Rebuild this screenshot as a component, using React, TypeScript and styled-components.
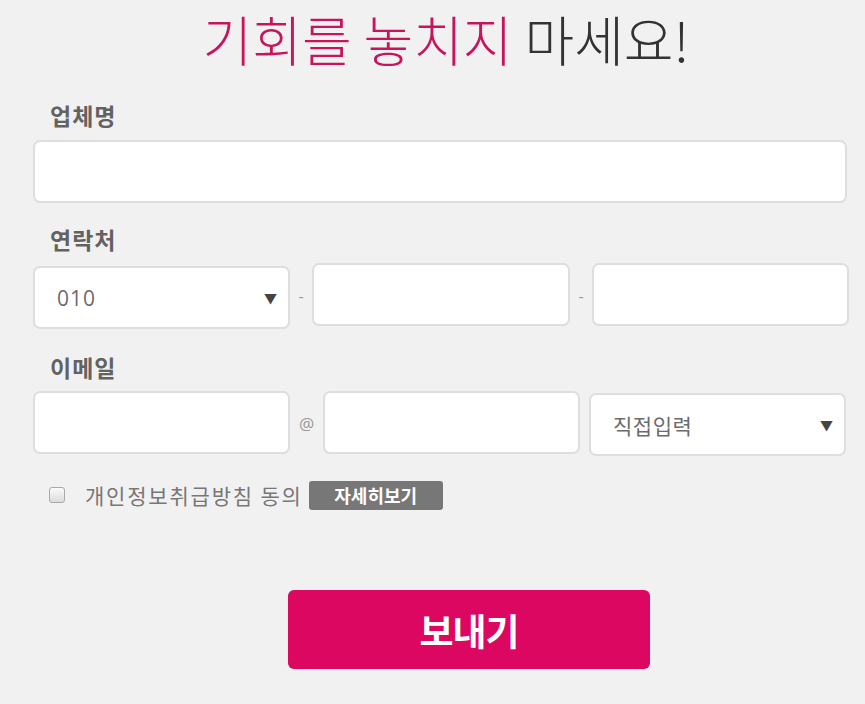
import styled, { createGlobalStyle } from "styled-components"

const GlobalStyle = createGlobalStyle`
    body {
        margin: 0;
        background: #f1f1f1;
        font-family: "Noto Sans CJK KR", "Noto Sans", sans-serif;
    }
`

const Page = styled.div`
    width: 865px;
    height: 704px;
    padding: 0 16px 0 33px;
    box-sizing: border-box;
    overflow: hidden;
`

const Title = styled.h1`
    margin: 0;
    padding-left: 10px;
    text-align: center;
    font-size: 54px;
    font-weight: 300;
    line-height: 78px;
    color: #333;
`

const Accent = styled.span`
    color: #c8145c;
`

const Label = styled.div<{ $top: number }>`
    margin-top: ${(p) => p.$top}px;
    padding-left: 17px;
    font-size: 23px;
    font-weight: 700;
    line-height: 32px;
    letter-spacing: 1px;
    color: #626262;
    height: 32px;
`

const TextBox = styled.input`
    display: block;
    box-sizing: border-box;
    width: 100%;
    height: 63px;
    background: #fff;
    border: 2px solid #dedede;
    border-radius: 7px;
    outline: none;
    margin: 0;
`

const WideBox = styled(TextBox)`
    width: 814px;
    margin-top: 9px;
`

const PhoneRow = styled.div`
    display: grid;
    grid-template-columns: 257px 22px 258px 22px 257px;
    align-items: start;
    margin-top: 8px;
`

const EmailRow = styled.div`
    display: grid;
    grid-template-columns: 257px 33px 257px 9px 257px;
    align-items: start;
    margin-top: 8px;
`

const Sep = styled.span<{ $size: number }>`
    align-self: center;
    text-align: center;
    font-family: "Open Sans", sans-serif;
    font-size: ${(p) => p.$size}px;
    color: #999;
`

const SelectBox = styled.div<{ $offset: number }>`
    box-sizing: border-box;
    height: 63px;
    margin-top: ${(p) => p.$offset}px;
    background: #fff;
    border: 2px solid #dedede;
    border-radius: 7px;
    display: flex;
    align-items: center;
    justify-content: space-between;
    padding: 0 11px 0 22px;
`

const SelectText = styled.span<{ $latin?: boolean }>`
    font-family: ${(p) => (p.$latin ? '"Open Sans", sans-serif' : '"Noto Sans CJK KR", sans-serif')};
    font-size: 21px;
    font-weight: 400;
    color: #6b6b6b;
    letter-spacing: ${(p) => (p.$latin ? 1 : 0.5)}px;
`

const Arrow = styled.span`
    font-size: 13px;
    color: #444;
`

const AgreeRow = styled.div`
    display: flex;
    align-items: center;
    margin-top: 23px;
    padding-left: 16px;
    height: 32px;
`

const Check = styled.span`
    box-sizing: border-box;
    width: 16px;
    height: 16px;
    border: 1px solid #a8a8a8;
    border-radius: 3px;
    background: linear-gradient(#fafafa, #dcdcdc);
`

const AgreeText = styled.span`
    margin-left: 20px;
    font-size: 21px;
    letter-spacing: 1.8px;
    color: #777;
`

const DetailButton = styled.span`
    margin-left: 6px;
    width: 134px;
    height: 29px;
    box-sizing: border-box;
    background: #777;
    border-radius: 3px;
    color: #fff;
    font-size: 18px;
    font-weight: 700;
    text-align: center;
    line-height: 29px;
`

const Submit = styled.button`
    display: block;
    margin: 79px 0 0 255px;
    width: 362px;
    height: 79px;
    border: none;
    border-radius: 6px;
    background: #dc0760;
    color: #fff;
    font-family: "Noto Sans CJK KR", sans-serif;
    font-size: 37px;
    font-weight: 700;
    letter-spacing: -1px;
`

export default function App() {
    return <Page>
        <GlobalStyle />
        <Title><Accent>기회를 놓치지</Accent> 마세요!</Title>

        <Label $top={21}>업체명</Label>
        <WideBox type="text" />

        <Label $top={20}>연락처</Label>
        <PhoneRow>
            <SelectBox $offset={3}>
                <SelectText $latin>010</SelectText>
                <Arrow>▼</Arrow>
            </SelectBox>
            <Sep $size={16}>-</Sep>
            <TextBox type="text" />
            <Sep $size={16}>-</Sep>
            <TextBox type="text" />
        </PhoneRow>

        <Label $top={22}>이메일</Label>
        <EmailRow>
            <TextBox type="text" />
            <Sep $size={17}>@</Sep>
            <TextBox type="text" />
            <span />
            <SelectBox $offset={2}>
                <SelectText>직접입력</SelectText>
                <Arrow>▼</Arrow>
            </SelectBox>
        </EmailRow>

        <AgreeRow>
            <Check />
            <AgreeText>개인정보취급방침 동의</AgreeText>
            <DetailButton>자세히보기</DetailButton>
        </AgreeRow>

        <Submit type="button">보내기</Submit>
    </Page>
}
